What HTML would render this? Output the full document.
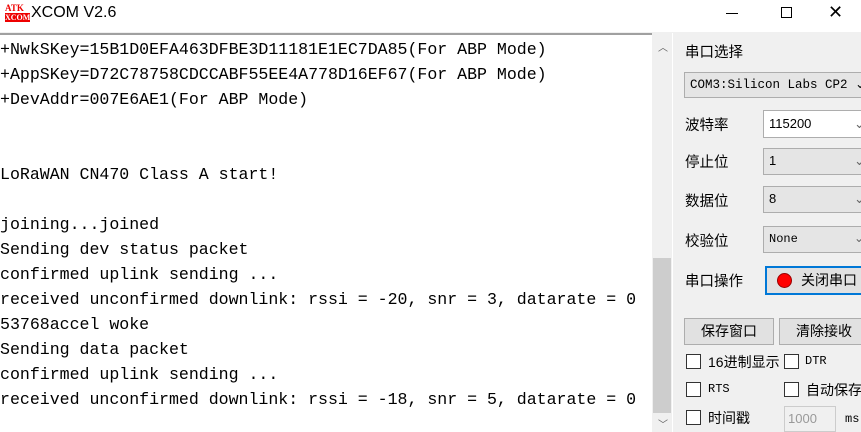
<!DOCTYPE html>
<html><head><meta charset="utf-8"><style>
*{margin:0;padding:0;box-sizing:border-box}
body{width:861px;height:432px;overflow:hidden;background:#f0f0f0;position:relative;font-family:"Liberation Sans","Noto Sans CJK SC",sans-serif}
.a{position:absolute}
#title{left:0;top:0;width:861px;height:32px;background:#fff}
#txt{left:0;top:33px;width:652px;height:399px;background:#fff;border-top:2px solid #a0a0a0}
.ln{position:absolute;left:0;font-family:"Liberation Mono","Noto Sans CJK SC",monospace;font-size:16.6px;white-space:pre;color:#000;line-height:20px;letter-spacing:-0.02px}
#sb{left:652px;top:33px;width:20px;height:399px;background:#f0f0f0}
.lbl{font-size:14.5px;color:#000;white-space:nowrap}
.sel{border:1px solid #adadad;background:#e5e5e5;font-size:13px;padding-left:5px;line-height:24px;white-space:nowrap;overflow:hidden}
.cb{width:15px;height:15px;border:1px solid #333;background:#fff}
.btn{border:1px solid #adadad;background:#e1e1e1;font-size:14px;text-align:center;line-height:24px}
</style></head><body>
<div class="a" id="title">
<div class="a" style="left:5px;top:4px;font:bold 9px 'Liberation Serif',serif;color:#e00;line-height:9px">ATK<br><span style="background:#e00;color:#fff;font-size:8px">XCOM</span></div>
<div class="a" style="left:31px;top:4px;font-size:16px;color:#000">XCOM V2.6</div>
<div class="a" style="left:726px;top:13px;width:12px;height:1px;background:#000"></div>
<div class="a" style="left:781px;top:7px;width:11px;height:11px;border:1px solid #000"></div>
<div class="a" style="left:828px;top:2px;font-size:18px;color:#000">✕</div>
</div>
<div class="a" id="txt">
<div class="ln" style="top:5px">+NwkSKey=15B1D0EFA463DFBE3D11181E1EC7DA85(For ABP Mode)</div>
<div class="ln" style="top:30px">+AppSKey=D72C78758CDCCABF55EE4A778D16EF67(For ABP Mode)</div>
<div class="ln" style="top:55px">+DevAddr=007E6AE1(For ABP Mode)</div>
<div class="ln" style="top:130px">LoRaWAN CN470 Class A start!</div>
<div class="ln" style="top:180px">joining...joined</div>
<div class="ln" style="top:205px">Sending dev status packet</div>
<div class="ln" style="top:230px">confirmed uplink sending ...</div>
<div class="ln" style="top:255px">received unconfirmed downlink: rssi = -20, snr = 3, datarate = 0</div>
<div class="ln" style="top:280px">53768accel woke</div>
<div class="ln" style="top:305px">Sending data packet</div>
<div class="ln" style="top:330px">confirmed uplink sending ...</div>
<div class="ln" style="top:355px">received unconfirmed downlink: rssi = -18, snr = 5, datarate = 0</div>
</div>
<div class="a" id="sb">
<div class="a" style="left:6px;top:6px;font-size:10px;color:#606060">︿</div>
<div class="a" style="left:1px;top:225px;width:18px;height:155px;background:#cdcdcd"></div>
<div class="a" style="left:6px;top:383px;font-size:10px;color:#606060">﹀</div>
</div>
<div class="a" style="left:672px;top:33px;width:1px;height:399px;background:#fff"></div>

<div class="a lbl" style="left:685px;top:41px">串口选择</div>
<div class="a sel" style="left:684px;top:72px;width:190px;height:26px;font-family:'Liberation Mono','Noto Sans CJK SC',monospace;font-size:12.5px">COM3:Silicon Labs CP2 ⌄</div>
<div class="a lbl" style="left:685px;top:114px">波特率</div>
<div class="a sel" style="left:763px;top:110px;width:110px;height:28px;background:#fff;line-height:26px">115200<span class="a" style="left:90px;top:0;color:#666">⌄</span></div>
<div class="a lbl" style="left:685px;top:151px">停止位</div>
<div class="a sel" style="left:763px;top:148px;width:110px;height:27px">1<span class="a" style="left:90px;top:0;color:#666">⌄</span></div>
<div class="a lbl" style="left:685px;top:190px">数据位</div>
<div class="a sel" style="left:763px;top:186px;width:110px;height:27px">8<span class="a" style="left:90px;top:0;color:#666">⌄</span></div>
<div class="a lbl" style="left:685px;top:230px">校验位</div>
<div class="a sel" style="left:763px;top:226px;width:110px;height:27px;font-family:'Liberation Mono',monospace;font-size:12px">None<span class="a" style="left:90px;top:0;color:#666">⌄</span></div>
<div class="a lbl" style="left:685px;top:270px">串口操作</div>
<div class="a btn" style="left:765px;top:266px;width:110px;height:29px;border:2px solid #0078d7;text-align:left;line-height:25px">
<span class="a" style="left:10px;top:5px;width:15px;height:15px;border-radius:50%;background:#f00;border:1px solid #900"></span>
<span class="a" style="left:34px;top:0">关闭串口</span></div>

<div class="a btn" style="left:684px;top:318px;width:90px;height:27px">保存窗口</div>
<div class="a btn" style="left:779px;top:318px;width:90px;height:27px">清除接收</div>

<div class="a cb" style="left:686px;top:354px"></div>
<div class="a lbl" style="left:708px;top:352px;font-size:14px">16进制显示</div>
<div class="a cb" style="left:784px;top:354px"></div>
<div class="a" style="left:805px;top:354px;font:12px 'Liberation Mono',monospace">DTR</div>
<div class="a cb" style="left:686px;top:382px"></div>
<div class="a" style="left:708px;top:382px;font:12px 'Liberation Mono',monospace">RTS</div>
<div class="a cb" style="left:784px;top:382px"></div>
<div class="a lbl" style="left:806px;top:380px;font-size:14px">自动保存</div>
<div class="a cb" style="left:686px;top:410px"></div>
<div class="a lbl" style="left:708px;top:408px;font-size:14px">时间戳</div>
<div class="a" style="left:784px;top:406px;width:52px;height:26px;border:1px solid #ccc;background:#f0f0f0;color:#999;font-size:13px;padding:4px 0 0 3px">1000</div>
<div class="a" style="left:845px;top:412px;font:12px 'Liberation Mono',monospace">ms</div>
</body></html>
